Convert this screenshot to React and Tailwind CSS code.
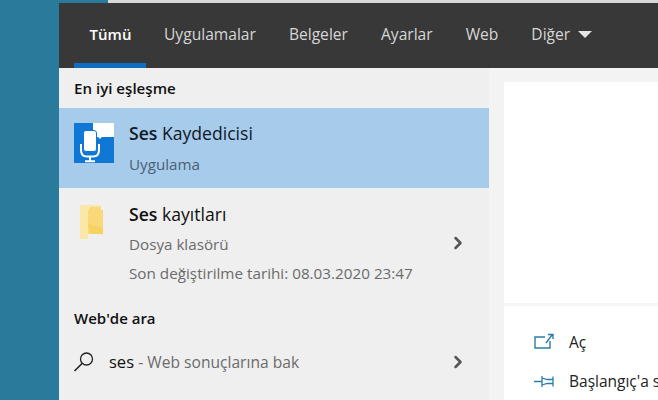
import { ChevronRight } from 'lucide-react';

const tabs = ['Uygulamalar', 'Belgeler', 'Ayarlar', 'Web'];

const MicIcon = () => (
    <svg width="40" height="40" viewBox="0 0 40 40" className="shrink-0">
        <rect width="40" height="40" fill="#0f78d4" />
        <path d="M19 0H40V14H28L26 16L24 14H19Z" fill="#fff" />
        <rect x="9.5" y="7.5" width="13" height="21" rx="2.5" fill="#fff" stroke="#0f78d4" strokeWidth="1" />
        <path d="M7 21V27Q7 33.5 13 33.5H19Q25 33.5 25 27V21" fill="none" stroke="#fff" strokeWidth="2" />
        <path d="M16 34V38M11 38.2H21" fill="none" stroke="#fff" strokeWidth="2" />
    </svg>
);

const FolderIcon = () => (
    <svg width="26" height="36" viewBox="0 0 26 36" className="shrink-0">
        <path d="M1 1H22V30H9V35H1Z" fill="#fbe7a6" />
        <path d="M9 7L11 3H22V6H24V30H9Z" fill="#f8d878" />
        <path d="M9 20L12 30H24V24Z" fill="#f7d25f" />
    </svg>
);

const SearchIcon = () => (
    <svg width="22" height="22" viewBox="0 0 22 22" className="shrink-0">
        <circle cx="13.5" cy="8" r="6" fill="none" stroke="#222" strokeWidth="1.3" />
        <path d="M9 12.5L1.5 20" fill="none" stroke="#222" strokeWidth="1.6" />
    </svg>
);

const OpenIcon = () => (
    <svg width="20" height="18" viewBox="0 0 20 18" className="shrink-0">
        <path d="M11 4H1V15H16V8" fill="none" stroke="#2b7ca8" strokeWidth="1.4" />
        <path d="M12 10L18 2M14 1.5H19V6" fill="none" stroke="#2b7ca8" strokeWidth="1.4" />
    </svg>
);

const PinIcon = () => (
    <svg width="21" height="14" viewBox="0 0 21 14" className="shrink-0">
        <path d="M0 6.5H8M8 1V12M8 3L13 4.5H19V1.5V11.5V8.5H13L8 10" fill="none" stroke="#2b7ca8" strokeWidth="1.3" />
    </svg>
);

const App = () => {
    return (
        <div className="w-[658px] h-[400px] overflow-hidden bg-[#2a7a9b] flex flex-col font-['Open_Sans',sans-serif]">
            {/* Strip of the window behind */}
            <div className="h-[3px] shrink-0 ml-[108px] bg-[#d8d8d8]"></div>

            <div className="flex-1 ml-[59px] flex flex-col min-h-0">
                {/* Tabs */}
                <div className="h-[65px] shrink-0 bg-[#383838] flex pl-[15px] text-[15.6px] text-[#d6d6d6]">
                    <div className="w-[72px] flex flex-col">
                        <div className="flex-1 flex items-center justify-center pt-[2px] pl-[1px] font-semibold text-[15px] text-white">Tümü</div>
                        <div className="h-[5px] bg-[#0f6cc0]"></div>
                    </div>
                    <div className="flex items-center gap-[33px] pl-[18px] pb-[1px]">
                        {tabs.map((tab) => (
                            <span key={tab}>{tab}</span>
                        ))}
                        <span className="flex items-center gap-[8px]">
                            Diğer
                            <span className="w-0 h-0 border-x-[7px] border-x-transparent border-t-[7px] border-t-[#e4e4e4]"></span>
                        </span>
                    </div>
                </div>

                <div className="flex-1 flex min-h-0 bg-[#f3f3f3]">
                    {/* Results */}
                    <div className="w-[430px] shrink-0 bg-[#efefef] flex flex-col">
                        <div className="h-10 shrink-0 flex items-center pl-[15px] text-[15.1px] font-semibold text-[#111]">En iyi eşleşme</div>

                        <div className="h-20 shrink-0 bg-[#a7cbea] flex items-start pl-[15px] pt-[15px] gap-[15px]">
                            <MicIcon />
                            <div className="-mt-[2px]">
                                <div className="text-[17.6px] leading-[24px] text-[#111827]">
                                    <span className="font-semibold">Ses</span> Kaydedicisi
                                </div>
                                <div className="mt-[9px] text-[15.2px] leading-5 text-[#4b6075]">Uygulama</div>
                            </div>
                        </div>

                        <div className="h-[113px] shrink-0 flex pl-[20px] pr-[24px] pt-[16px]">
                            <FolderIcon />
                            <div className="ml-[24px] -mt-[2px] flex-1">
                                <div className="text-[17.6px] leading-[24px] text-[#111]">
                                    <span className="font-semibold">Ses</span> kayıtları
                                </div>
                                <div className="mt-[8px] text-[15.2px] leading-5 text-[#6b6b6b]">Dosya klasörü</div>
                                <div className="mt-[9px] text-[15.25px] leading-5 text-[#6b6b6b]">Son değiştirilme tarihi: 08.03.2020 23:47</div>
                            </div>
                            <ChevronRight size={20} strokeWidth={3} className="text-[#555] mt-[29px] -mr-[3px]" />
                        </div>

                        <div className="h-[34px] shrink-0 flex items-center pl-[15px] text-[15px] font-semibold text-[#111]">Web'de ara</div>

                        <div className="h-[54px] shrink-0 flex items-center pl-[14px] pr-[21px]">
                            <SearchIcon />
                            <div className="ml-[14px] flex-1 text-[16.5px] text-[#111]">
                                ses <span className="text-[15.6px] text-[#6b6b6b]">- Web sonuçlarına bak</span>
                            </div>
                            <ChevronRight size={20} strokeWidth={3} className="text-[#555]" />
                        </div>
                    </div>

                    {/* Preview */}
                    <div className="flex-1 ml-[15px] mt-[14px] bg-white flex flex-col">
                        <div className="h-[224px] shrink-0 border-b-[3px] border-[#f5f5f5]"></div>
                        <div className="pl-[30px] pt-[26px] text-[15.5px] text-[#222] whitespace-nowrap">
                            <div className="flex items-center gap-[15px] h-[20px]">
                                <OpenIcon />
                                <span className="mt-[1px]">Aç</span>
                            </div>
                            <div className="flex items-center gap-[14px] h-[20px] mt-[20px]">
                                <PinIcon />
                                <span>Başlangıç'a sabitle</span>
                            </div>
                        </div>
                    </div>
                </div>
            </div>
        </div>
    );
};

export default App;
